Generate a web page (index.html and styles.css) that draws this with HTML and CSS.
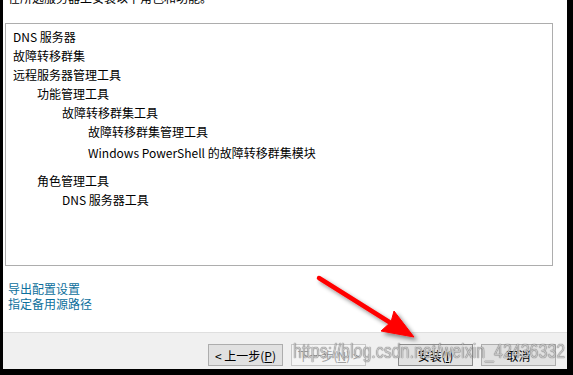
FILE: index.html
```html
<!DOCTYPE html>
<html>

<head>
    <meta charset="utf-8">
    <title>添加角色和功能向导</title>
    <link rel="stylesheet" href="styles.css">
</head>

<body>
    <div class="window">
        <div class="intro">在所选服务器上安装以下角色和功能。</div>

        <div class="listbox">
            <div class="item">DNS 服务器</div>
            <div class="item">故障转移群集</div>
            <div class="item">远程服务器管理工具</div>
            <div class="item level1">功能管理工具</div>
            <div class="item level2">故障转移群集工具</div>
            <div class="item level3">故障转移群集管理工具</div>
            <div class="item level3 spaced">Windows PowerShell 的故障转移群集模块</div>
            <div class="item level1 group">角色管理工具</div>
            <div class="item level2">DNS 服务器工具</div>
        </div>

        <div class="links">
            <a href="#export">导出配置设置</a>
            <a href="#source">指定备用源路径</a>
        </div>

        <div class="footer">
            <button type="button" class="btn">&lt; 上一步(<u>P</u>)</button>
            <button type="button" class="btn" disabled>下一步(<u>N</u>) &gt;</button>
            <button type="button" class="btn install">安装(<u>I</u>)</button>
            <button type="button" class="btn">取消</button>
        </div>

        <!-- annotation arrow drawn over the dialog -->
        <svg class="arrow" width="573" height="375" viewBox="0 0 573 375">
            <defs>
                <filter id="shadow" x="-20%" y="-20%" width="140%" height="140%">
                    <feDropShadow dx="3" dy="3" stdDeviation="2" flood-color="#000" flood-opacity="0.45" />
                </filter>
            </defs>
            <g filter="url(#shadow)" fill="#f00" stroke="#f00">
                <line x1="319" y1="278" x2="394" y2="325" stroke-width="4.5" stroke-linecap="round" />
                <polygon points="414,337 381,331 391,322 394,311" stroke-width="1" />
            </g>
        </svg>

        <div class="watermark">https://blog.csdn.net/weixin_42436332</div>
    </div>
</body>

</html>
```

FILE: styles.css
```css
body {
    margin: 0;
    background-color: #000;
    font-family: "Noto Sans CJK SC", "Noto Sans", sans-serif;
    font-size: 12px;
    color: #000;
}

.window {
    position: relative;
    box-sizing: border-box;
    display: flex;
    flex-direction: column;
    width: 564px;
    height: 369px;
    margin-left: 3px;
    background-color: #fff;
    overflow: hidden;
}

.intro {
    line-height: 16px;
    margin-top: -10px;
    padding-left: 5px;
    white-space: nowrap;
}

.listbox {
    box-sizing: border-box;
    height: 243px;
    margin: 17px 14px 0 2px;
    padding: 3px 0 0 7px;
    border: 1px solid #adadad;
}

.item {
    line-height: 19px;
    white-space: nowrap;
}

.level1 {
    padding-left: 24px;
}

.level2 {
    padding-left: 49px;
}

.level3 {
    padding-left: 75px;
}

.spaced {
    margin-top: 2px;
}

.group {
    margin-top: 9px;
}

.links {
    display: flex;
    flex-direction: column;
    align-items: flex-start;
    margin-top: 15px;
    padding-left: 5px;
}

.links a {
    line-height: 15px;
    color: #0d6f9c;
    text-decoration: none;
}

.footer {
    display: flex;
    justify-content: flex-end;
    gap: 8px;
    margin-top: auto;
    height: 37px;
    box-sizing: border-box;
    padding: 11px 11px 0 0;
    border-top: 1px solid #dfdfdf;
    background-color: #f0f0f0;
}

.btn {
    box-sizing: border-box;
    width: 75px;
    height: 22px;
    padding: 0;
    font-family: inherit;
    font-size: 12px;
    color: #000;
    background-color: #e1e1e1;
    border: 1px solid #adadad;
    border-radius: 0;
}

.btn:disabled {
    color: #a0a0a0;
    background-color: #f4f4f4;
    border-color: #c8c8c8;
}

.install {
    margin-left: 24px;
    border-color: #8c8c8c;
}

.arrow {
    position: absolute;
    left: -3px;
    top: 0;
    pointer-events: none;
}

.watermark {
    position: absolute;
    left: 290px;
    top: 340px;
    font-family: "Liberation Sans", Arial, sans-serif;
    font-size: 20px;
    line-height: 22px;
    transform: scaleX(0.8);
    transform-origin: left top;
    color: rgba(255, 255, 255, 0.7);
    text-shadow: 0 0 1px rgba(0, 0, 0, 0.7), 0 0 1px rgba(0, 0, 0, 0.4);
    white-space: nowrap;
    pointer-events: none;
}
```
